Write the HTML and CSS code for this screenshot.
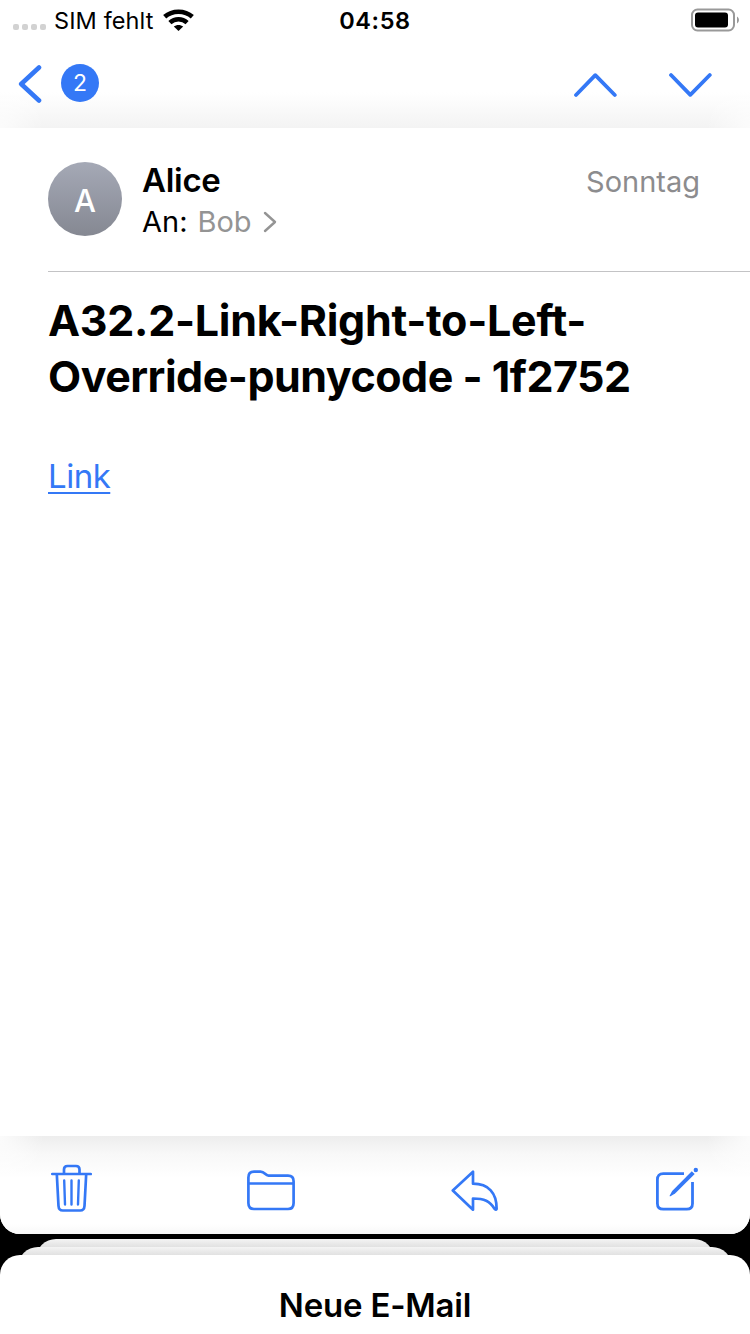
FILE: index.html
```html
<!DOCTYPE html>
<html lang="de">
<head>
<meta charset="utf-8">
<title>Mail</title>
<link rel="stylesheet" href="styles.css">
</head>
<body>
<div class="screen">
  <main class="mail">
    <header class="top">
      <div class="status">
        <div class="carrier">
          <span class="signal"><i></i><i></i><i></i><i></i></span>
          <span class="carrier-name">SIM fehlt</span>
          <svg class="wifi" width="32" height="24" viewBox="0 0 32 24" fill="none" stroke="#000" stroke-width="4.600">
            <path d="M2.700 8.800C10.200 2 22.800 2 30.300 8.800"/>
            <path d="M7.900 14.600C12.800 10.200 20.200 10.200 25.100 14.600"/>
            <path d="M16.500 23l-4.700-4.400c2.600-2.300 6.800-2.300 9.400 0z" fill="#000" stroke="none"/>
          </svg>
        </div>
        <time class="clock">04:58</time>
        <svg class="battery" width="50" height="24" viewBox="0 0 50 24">
          <rect x="2" y="1.500" width="42" height="21" rx="5.500" fill="none" stroke="#999" stroke-width="2"/>
          <rect x="5" y="4.500" width="33" height="15" rx="3" fill="#000"/>
          <path d="M47 8.500c2.600 1.400 2.600 5.600 0 7z" fill="#999"/>
        </svg>
      </div>
      <nav class="nav">
        <svg class="back" width="24" height="40" viewBox="0 0 24 40" fill="none" stroke="#3478f6" stroke-width="4.600" stroke-linecap="round" stroke-linejoin="round"><path d="M21 3.500L3.200 20 21 36.500"/></svg>
        <span class="badge">2</span>
        <svg class="up" width="44" height="28" viewBox="0 0 44 28" fill="none" stroke="#3478f6" stroke-width="3.800" stroke-linecap="round" stroke-linejoin="round"><path d="M3 24L22.300 4.200 41.800 24"/></svg>
        <svg class="down" width="44" height="28" viewBox="0 0 44 28" fill="none" stroke="#3478f6" stroke-width="3.800" stroke-linecap="round" stroke-linejoin="round"><path d="M3 4l19.300 19.800L41.800 4"/></svg>
      </nav>
    </header>
    <article class="message">
      <div class="sender">
        <div class="avatar">A</div>
        <div class="people">
          <div class="from">Alice</div>
          <div class="to"><span class="to-label">An:</span><span class="to-name">Bob</span>
            <svg class="chevron" width="14" height="22" viewBox="0 0 14 22" fill="none" stroke="#949494" stroke-width="2.400" stroke-linecap="round" stroke-linejoin="round"><path d="M2 2l10 9-10 9"/></svg>
          </div>
        </div>
        <time class="date">Sonntag</time>
      </div>
      <h1 class="subject"><span class="line-a">A32.2-Link-Right-to-Left-</span><br><span class="line-b">Override-punycode - 1f2752</span></h1>
      <p class="body"><a class="link" href="#">Link</a></p>
    </article>
    <footer class="toolbar">
      <svg width="42" height="50" viewBox="0 0 42 50" fill="none" stroke="#3478f6" stroke-width="2.700" stroke-linecap="round" stroke-linejoin="round">
        <path d="M2.300 12h38.400M14 12V7.500Q14 4 17.500 4h8.500Q29.500 4 29.500 7.500V12M6.800 12l1.700 32q.3 4.500 4.300 4.500h17.400q4 0 4.300-4.500L36.200 12"/>
        <path d="M14.200 18.500l.8 24M21.500 18.500v24M28.800 18.500l-.8 24" stroke-width="2.400"/>
      </svg>
      <svg width="50" height="50" viewBox="0 0 50 50" fill="none" stroke="#3478f6" stroke-width="2.700" stroke-linejoin="round">
        <path d="M2.400 41V15.500Q2.400 9.700 8 9.700h6.500c4.500 0 4.500 3.900 8 3.900H42q5.600 0 5.600 5.600V41q0 6-5.600 6H8q-5.600 0-5.600-6zM2.400 21.500h45.200"/>
      </svg>
      <svg width="50" height="50" viewBox="0 0 50 50" fill="none" stroke="#3478f6" stroke-width="2.700" stroke-linejoin="round">
        <path d="M1.800 28.400L22 9.700v12C37.500 21.700 45.800 31 45.600 47c-.4 1-1.400 1-1.900 0C38.800 39 33.200 36.500 22 36.500v11.200z"/>
      </svg>
      <svg class="compose" width="46" height="50" viewBox="0 0 46 50" fill="none" stroke="#3478f6" stroke-width="2.800">
        <path d="M29 11.700H8.300Q2.400 11.700 2.400 17.500v24q0 5.700 5.900 5.700h23.400q5.800 0 5.800-5.700V20"/>
        <path d="M36.800 9.200l2.900 2.900-19.600 19.500-4.600 2.700q-1 .3-.8-.8l2.500-4.600z" fill="#3478f6" stroke="none"/>
        <circle cx="40.800" cy="8" r="2.200" fill="#3478f6" stroke="none"/>
      </svg>
    </footer>
  </main>
  <section class="stack">
    <div class="sheet sheet-back"></div>
    <div class="sheet sheet-middle"></div>
    <div class="draft">Neue E-Mail</div>
  </section>
</div>
</body>
</html>
```
FILE: styles.css
```css
* { box-sizing: border-box; }
body { margin: 0; font-family: Inter, "Liberation Sans", sans-serif; color: #000; background: #000; }
svg { display: block; flex: none; }
.screen { width: 750px; height: 1334px; overflow: hidden; display: flex; flex-direction: column; gap: 5px; background: #000; }
.mail { flex: none; height: 1234px; display: flex; flex-direction: column; background: #fff; border-radius: 0 0 20px 20px; overflow: hidden; }
.top { height: 128px; background: radial-gradient(ellipse 44px 60px at 0 100%, rgba(255,255,255,.7), transparent), radial-gradient(ellipse 44px 60px at 100% 100%, rgba(255,255,255,.7), transparent), linear-gradient(#fff 92px, #fcfcfc 102px, #f3f3f3); }
.status { height: 40px; display: grid; grid-template-columns: 1fr auto 1fr; align-items: center; }
.carrier { display: flex; align-items: center; padding-left: 13px; }
.signal { display: flex; gap: 3px; width: 33px; padding-top: 13px; }
.signal i { width: 6px; height: 6px; border-radius: 2px; background: #d2d2d2; }
.carrier-name { margin-left: 8px; font-size: 23.5px; line-height: 38px; padding-top: 2px; letter-spacing: .1px; white-space: nowrap; }
.wifi { margin-left: 9px; }
.clock { font-size: 23.5px; font-weight: 600; line-height: 38px; padding-top: 2px; letter-spacing: .6px; }
.battery { justify-self: end; margin-right: 10px; }
.nav { height: 88px; display: flex; align-items: flex-start; padding: 24px 38px 0 18px; }
.badge { width: 38px; height: 38px; margin-left: 19px; border-radius: 50%; background: #3478f6; color: #fff; font-size: 23px; line-height: 39px; text-align: center; }
.up { margin: 7px 51px 0 auto; }
.down { margin-top: 7px; }
.message { flex: 1; padding-left: 48px; background: #fff; }
.sender { height: 144px; display: flex; align-items: flex-start; padding: 34px 50px 0 0; border-bottom: 1px solid #c3c3c5; }
.avatar { width: 74px; height: 74px; border-radius: 50%; background: linear-gradient(#a5a9b6, #858892); color: #fff; font-size: 31px; font-weight: 500; line-height: 78px; text-align: center; }
.people { margin-left: 20px; }
.from { font-size: 33px; font-weight: 600; line-height: 36px; letter-spacing: -.3px; }
.to { display: flex; align-items: center; margin-top: 2px; font-size: 29px; line-height: 44px; }
.to-name { margin-left: 10px; color: #949494; }
.chevron { margin-left: 11px; }
.date { margin-left: auto; color: #8c8c8e; font-size: 29px; line-height: 40px; }
.subject { margin: 20px 0 0; font-size: 43px; line-height: 56px; font-weight: 700; white-space: nowrap; }
.line-a { letter-spacing: -.28px; }
.line-b { letter-spacing: -.5px; }
.body { margin: 50px 0 0; font-size: 33px; line-height: 44px; letter-spacing: -.5px; }
.link { color: #3478f6; text-decoration-thickness: 2px; text-underline-offset: 4px; }
.toolbar { height: 98px; display: flex; justify-content: space-between; padding: 26px 51px 0 50px; background: radial-gradient(ellipse 44px 60px at 0 0, rgba(255,255,255,.8), transparent), radial-gradient(ellipse 44px 60px at 100% 0, rgba(255,255,255,.8), transparent), linear-gradient(#ededed, #f8f8f8 18px, #fcfcfc 32px, #fff 42px, #fff 88px, #f8f8f8); }
.compose { margin-right: -2px; }
.stack { flex: 1; display: flex; flex-direction: column; }
.sheet { height: 28px; margin-bottom: -20px; border-radius: 20px 20px 0 0; background: linear-gradient(#f4f4f4, #e1e1e1 8px); flex: none; }
.sheet-back { margin-left: 36px; margin-right: 36px; }
.sheet-middle { margin-left: 18px; margin-right: 18px; }
.draft { flex: 1; border-radius: 20px 20px 0 0; background: #fff; font-size: 33px; font-weight: 600; line-height: 100px; letter-spacing: -.2px; text-align: center; }
```
